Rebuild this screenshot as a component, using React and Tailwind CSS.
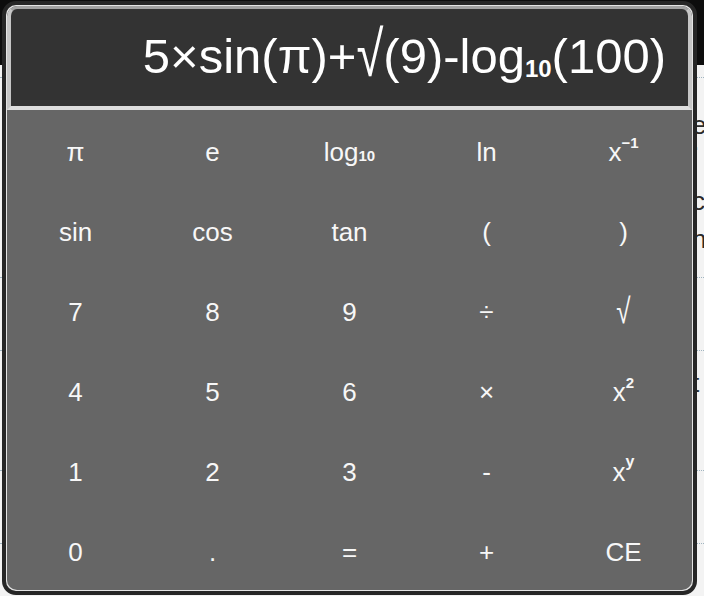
const Sub = ({ className, children }) => (
  <span className={`font-bold relative ${className}`}>{children}</span>
);
const Root = ({ className }) => (
  <span className={`inline-block origin-bottom ${className}`}>√</span>
);

const KEYS = [
  ['π', 'e', <>log<Sub className="text-[15px] top-[3px]">10</Sub></>, 'ln', <>x<Sub className="text-[15px] -top-[10px]">−1</Sub></>],
  ['sin', 'cos', 'tan', '(', ')'],
  ['7', '8', '9', '÷', <Root className="scale-y-[1.35] translate-y-[3px]" />],
  ['4', '5', '6', '×', <>x<Sub className="text-[15px] -top-[10px]">2</Sub></>],
  ['1', '2', '3', '-', <>x<Sub className="text-[16px] -top-[10px]">y</Sub></>],
  ['0', '.', '=', '+', 'CE'],
];

// bits of the page behind the calculator window
const DOT_LINES = [77, 277, 350, 470, 543];
const EDGE_LETTERS = [
  { ch: 'e', top: 112 },
  { ch: '.', top: 128 },
  { ch: 'c', top: 188 },
  { ch: 'n', top: 226 },
  { ch: 't', top: 370 },
];

export default function App() {
  return (
    <div className="relative w-[704px] h-[596px] overflow-hidden bg-[#f3f3f3] font-['Liberation_Sans','Noto_Sans',sans-serif]">
      <div className="h-[65px] bg-[#0d0d0d]" />
      {DOT_LINES.map((y) => (
        <div key={y} className="absolute left-0 right-0 border-t border-dotted border-[#9fb4c0]" style={{ top: y }} />
      ))}
      {EDGE_LETTERS.map((l) => (
        <span key={l.top} className="absolute left-[692px] text-[26px] leading-none text-[#2a2a2a]" style={{ top: l.top }}>
          {l.ch}
        </span>
      ))}

      <Calculator />
    </div>
  );
}

function Calculator() {
  return (
    <div className="absolute left-[2px] top-[1px] w-[695px] h-[594px] rounded-[14px] border-[4px] border-[#262626] bg-[#e4e4e4] p-[1px]">
      <div className="flex flex-col h-full rounded-[10px] overflow-hidden bg-[#666666]">
        <div className="h-[104px] shrink-0 flex items-center justify-end pr-[22px] pb-[2px] bg-[#333333] border-t-[3px] border-x-[4px] border-b-[4px] border-t-[#a2a2a2] border-x-[#c6c6c6] border-b-[#dedede] rounded-t-[10px]">
          <span className="text-[49px] leading-none text-white whitespace-nowrap">
            5×sin(π)+<Root className="scale-y-[1.3] translate-y-[5px]" />(9)-log<Sub className="text-[24px] top-[4px]">10</Sub>(100)
          </span>
        </div>
        <div className="flex-1 grid grid-cols-5 grid-rows-6">
          {KEYS.flat().map((k, i) => (
            <button key={i} className="flex items-center justify-center pt-[4px] text-[26px] leading-none text-[#f7f7f7]">
              {k}
            </button>
          ))}
        </div>
      </div>
    </div>
  );
}
